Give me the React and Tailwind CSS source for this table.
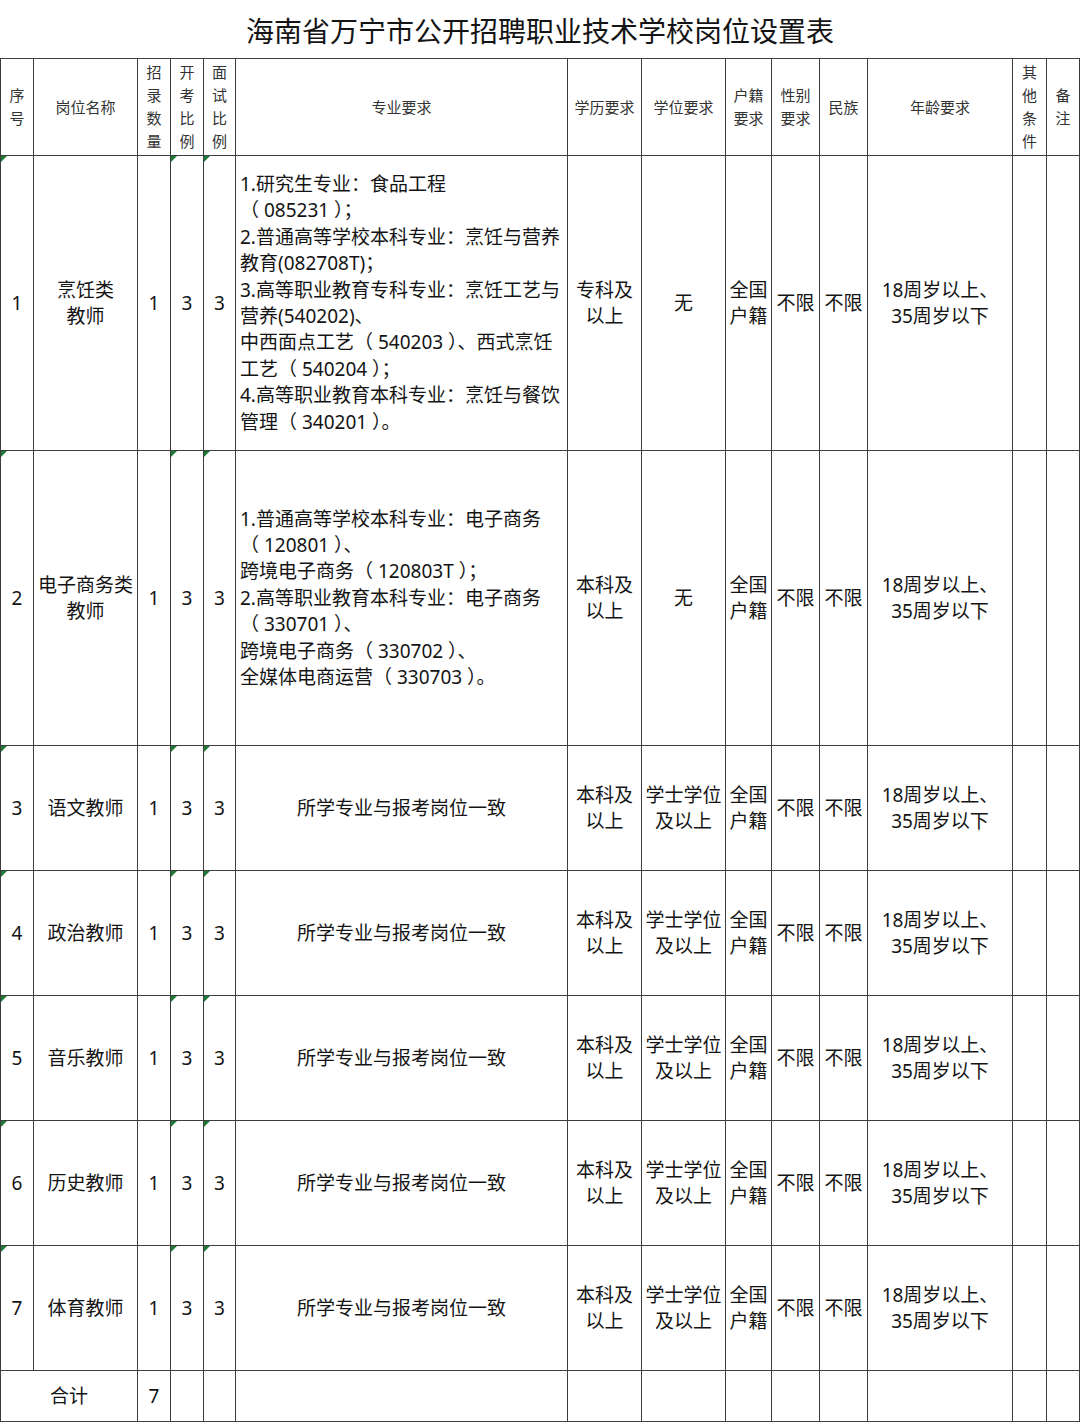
const font = { fontFamily: '"Noto Sans", "Noto Sans CJK SC", sans-serif' };

const cols = [33, 104, 33, 33, 32, 332, 74, 84, 46, 48, 48, 145, 34, 33];

const headers = [
  ["序", "号"],
  ["岗位名称"],
  ["招", "录", "数", "量"],
  ["开", "考", "比", "例"],
  ["面", "试", "比", "例"],
  ["专业要求"],
  ["学历要求"],
  ["学位要求"],
  ["户籍", "要求"],
  ["性别", "要求"],
  ["民族"],
  ["年龄要求"],
  ["其", "他", "条", "件"],
  ["备", "注"],
];

const rows = [
  {
    no: "1",
    name: ["烹饪类", "教师"],
    h: "h-[295px]",
    major: [
      "1.研究生专业：食品工程",
      "（ 085231 ）；",
      "2.普通高等学校本科专业：烹饪与营养",
      "教育(082708T)；",
      "3.高等职业教育专科专业：烹饪工艺与",
      "营养(540202)、",
      "中西面点工艺（ 540203 ）、西式烹饪",
      "工艺（ 540204 ）；",
      "4.高等职业教育本科专业：烹饪与餐饮",
      "管理（ 340201 ）。",
    ],
    edu: ["专科及", "以上"],
    degree: ["无"],
  },
  {
    no: "2",
    name: ["电子商务类", "教师"],
    h: "h-[295px]",
    major: [
      "1.普通高等学校本科专业：电子商务",
      "（ 120801 ）、",
      "跨境电子商务（ 120803T ）；",
      "2.高等职业教育本科专业：电子商务",
      "（ 330701 ）、",
      "跨境电子商务（ 330702 ）、",
      "全媒体电商运营（ 330703 ）。",
    ],
    edu: ["本科及", "以上"],
    degree: ["无"],
  },
  ...[
    ["3", "语文教师"],
    ["4", "政治教师"],
    ["5", "音乐教师"],
    ["6", "历史教师"],
    ["7", "体育教师"],
  ].map(([no, name]) => ({
    no,
    name: [name],
    h: "h-[125px]",
    major: null,
    edu: ["本科及", "以上"],
    degree: ["学士学位", "及以上"],
  })),
];

const cell = "border border-[#3d3d3d] p-0 text-center align-middle";

function Lines({ items }) {
  return items.map((t, i) => (
    <div key={i} className="whitespace-pre">
      {t}
    </div>
  ));
}

function Tick() {
  return (
    <span className="absolute left-0 top-0 h-0 w-0 border-r-[6px] border-t-[6px] border-r-transparent border-t-[#1f7a35]" />
  );
}

export default function App() {
  return (
    <div className="w-[1080px] bg-white text-[#141414]" style={font}>
      <div className="flex h-[58px] items-center justify-center pt-[3px] text-[28px]">
        海南省万宁市公开招聘职业技术学校岗位设置表
      </div>
      <table className="w-[1080px] table-fixed border-collapse">
        <colgroup>
          {cols.map((w, i) => (
            <col key={i} style={{ width: w }} />
          ))}
        </colgroup>
        <thead>
          <tr className="h-[97px] text-[15px] leading-[23px] text-[#333]">
            {headers.map((h, i) => (
              <th key={i} className={`${cell} font-normal`}>
                <Lines items={h} />
              </th>
            ))}
          </tr>
        </thead>
        <tbody className="text-[19px] leading-[26.4px]">
          {rows.map((r) => (
            <tr key={r.no} className={r.h}>
              <td className={`${cell} relative`}>
                <Tick />
                {r.no}
              </td>
              <td className={cell}>
                <Lines items={r.name} />
              </td>
              <td className={cell}>1</td>
              <td className={`${cell} relative`}>
                <Tick />3
              </td>
              <td className={`${cell} relative`}>
                <Tick />3
              </td>
              {r.major ? (
                <td className={`${cell} pl-[4px] text-left`}>
                  <Lines items={r.major} />
                </td>
              ) : (
                <td className={cell}>所学专业与报考岗位一致</td>
              )}
              <td className={cell}>
                <Lines items={r.edu} />
              </td>
              <td className={cell}>
                <Lines items={r.degree} />
              </td>
              <td className={cell}>
                <Lines items={["全国", "户籍"]} />
              </td>
              <td className={cell}>不限</td>
              <td className={cell}>不限</td>
              <td className={cell}>
                <Lines items={["18周岁以上、", "35周岁以下"]} />
              </td>
              <td className={cell}></td>
              <td className={cell}></td>
            </tr>
          ))}
          <tr className="h-[51px]">
            <td className={cell} colSpan={2}>
              合计
            </td>
            <td className={cell}>7</td>
            {Array.from({ length: 11 }).map((_, i) => (
              <td key={i} className={cell}></td>
            ))}
          </tr>
        </tbody>
      </table>
    </div>
  );
}
